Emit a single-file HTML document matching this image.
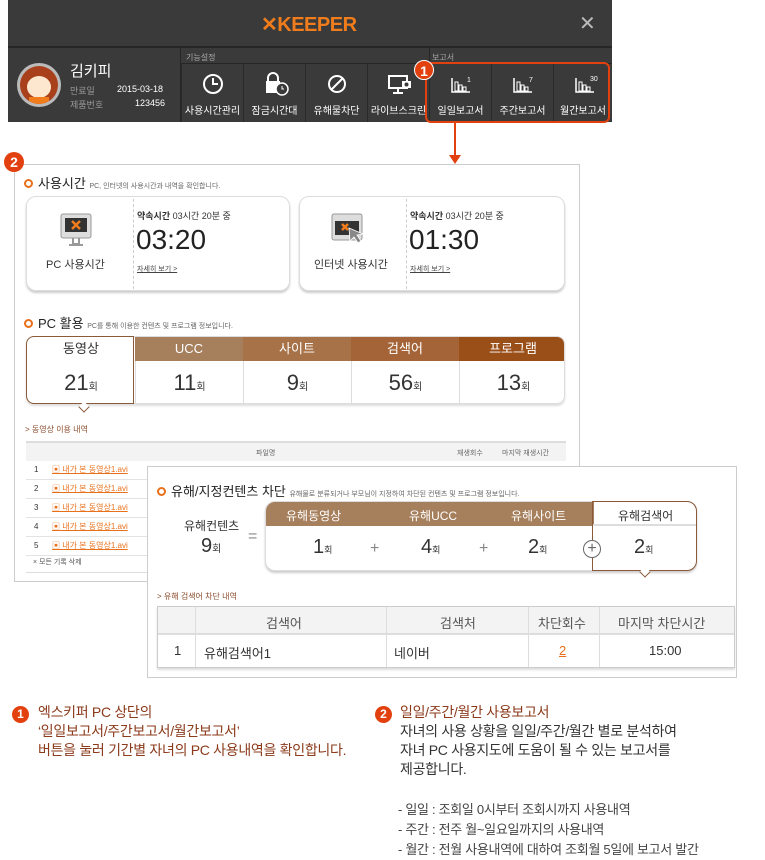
<!DOCTYPE html>
<html><head><meta charset="utf-8"><style>
*{box-sizing:border-box;margin:0;padding:0}
body{width:765px;height:860px;background:#fff;position:relative;overflow:hidden;font-family:"Liberation Sans","Noto Sans CJK KR",sans-serif;color:#333}
.a{position:absolute}
.t{position:absolute;white-space:nowrap}
.btn{position:absolute;top:64px;height:58px;width:62px;border-left:1px solid #2a2a2a;color:#fff;font-size:10px;text-align:center}
.btn span{position:absolute;bottom:5px;left:0;right:0}
.btn svg{position:absolute;top:8px;left:19px}
.circ{position:absolute;width:20px;height:20px;border-radius:50%;background:#e2410f;color:#fff;font-weight:bold;font-size:14px;text-align:center;line-height:20px}
.card{position:absolute;border:1px solid #ddd;border-radius:10px;box-shadow:0 2px 2px #ccc;background:#fff}
.dot{display:inline-block;width:9px;height:9px;border:2px solid #e8701a;border-radius:50%;margin-right:5px}
.tab{position:absolute;top:0;height:24px;width:108px;color:#fff;font-size:13px;text-align:center;line-height:24px}
.val{position:absolute;top:24px;height:44px;width:108px;text-align:center;font-size:22px;line-height:44px;border-left:1px solid #ddd}
.val small{font-size:10px}
.row{position:absolute;left:26px;width:540px;height:19px;border-bottom:1px solid #e3e3e3;font-size:8px}
</style></head><body>

<!-- top bar -->
<div class="a" style="left:8px;top:0;width:604px;height:122px;background:#3a3a3a"></div>
<div class="a" style="left:8px;top:46px;width:604px;height:2px;background:#262626"></div>
<div class="t" style="left:261px;top:12px;font-size:20px;font-weight:bold;color:#f07c1c;letter-spacing:-0.5px"><span style="color:#f07c1c">✕</span>KEEPER</div>
<div class="t" style="left:579px;top:11px;font-size:20px;color:#bbb">✕</div>
<div class="a" style="left:180px;top:48px;width:1px;height:74px;background:#262626"></div>
<div class="a" style="left:181px;top:63px;width:431px;height:1px;background:#262626"></div>
<div class="t" style="left:186px;top:52px;font-size:8px;color:#aaa">기능설정</div>
<div class="t" style="left:432px;top:52px;font-size:8px;color:#aaa">보고서</div>
<div class="a" style="left:429px;top:48px;width:1px;height:16px;background:#262626"></div>
<!-- avatar -->
<div class="a" style="left:17px;top:63px;width:44px;height:44px;border-radius:50%;background:#bbb"></div>
<div class="a" style="left:20px;top:66px;width:38px;height:38px;border-radius:50%;background:#a8401c;overflow:hidden">
 <div class="a" style="left:7px;top:10px;width:24px;height:22px;border-radius:50%;background:#fde7cf"></div>
 <div class="a" style="left:9px;top:31px;width:20px;height:8px;background:#f07c1c"></div>
</div>
<div class="t" style="left:70px;top:60px;font-size:15px;color:#fff">김키피</div>
<div class="t" style="left:70px;top:84px;font-size:9px;color:#999">만료일</div>
<div class="t" style="left:70px;top:98px;font-size:9px;color:#999">제품번호</div>
<div class="t" style="left:117px;top:84px;font-size:9px;color:#fff">2015-03-18</div>
<div class="t" style="left:135px;top:98px;font-size:9px;color:#fff">123456</div>

<div class="btn" style="left:181px"><svg width="24" height="24"><circle cx="12" cy="12" r="9" stroke="#fff" stroke-width="2" fill="none"/><path d="M12 6v6h5" stroke="#fff" stroke-width="2" fill="none"/></svg><span>사용시간관리</span></div>
<div class="btn" style="left:243px"><svg width="26" height="24"><path d="M5 9V6a5 5 0 0 1 10 0v3" stroke="#fff" stroke-width="2" fill="none"/><rect x="3" y="9" width="14" height="12" fill="#fff"/><circle cx="19" cy="17" r="6" fill="#3a3a3a" stroke="#fff" stroke-width="1.5"/><path d="M19 14v3h2" stroke="#fff" fill="none"/></svg><span>잠금시간대</span></div>
<div class="btn" style="left:305px"><svg width="24" height="24"><circle cx="12" cy="12" r="8" stroke="#fff" stroke-width="2" fill="none"/><path d="M6 18L18 6" stroke="#fff" stroke-width="2"/></svg><span>유해물차단</span></div>
<div class="btn" style="left:367px"><svg width="26" height="24"><rect x="2" y="4" width="18" height="12" stroke="#fff" stroke-width="2" fill="none"/><path d="M11 16v4M6 21h10" stroke="#fff" stroke-width="2"/><rect x="15" y="9" width="9" height="7" fill="#fff"/><circle cx="19.5" cy="12.5" r="2" fill="#3a3a3a"/></svg><span>라이브스크린</span></div>
<div class="btn" style="left:429px"><svg width="26" height="24"><path d="M3 6v14h18" stroke="#fff" fill="none" stroke-width="1.5"/><rect x="6" y="10" width="3" height="9" fill="none" stroke="#fff"/><rect x="10" y="13" width="3" height="6" fill="none" stroke="#fff"/><rect x="14" y="15" width="3" height="4" fill="none" stroke="#fff"/><text x="18" y="10" font-size="7" fill="#fff">1</text></svg><span>일일보고서</span></div>
<div class="btn" style="left:491px"><svg width="26" height="24"><path d="M3 6v14h18" stroke="#fff" fill="none" stroke-width="1.5"/><rect x="6" y="10" width="3" height="9" fill="none" stroke="#fff"/><rect x="10" y="13" width="3" height="6" fill="none" stroke="#fff"/><rect x="14" y="15" width="3" height="4" fill="none" stroke="#fff"/><text x="18" y="10" font-size="7" fill="#fff">7</text></svg><span>주간보고서</span></div>
<div class="btn" style="left:553px;width:59px"><svg width="30" height="24"><path d="M3 6v14h18" stroke="#fff" fill="none" stroke-width="1.5"/><rect x="6" y="10" width="3" height="9" fill="none" stroke="#fff"/><rect x="10" y="13" width="3" height="6" fill="none" stroke="#fff"/><rect x="14" y="15" width="3" height="4" fill="none" stroke="#fff"/><text x="17" y="9" font-size="7" fill="#fff">30</text></svg><span>월간보고서</span></div>
<div class="a" style="left:425px;top:62px;width:185px;height:61px;border:2px solid #e2410f;border-radius:6px"></div>
<div class="circ" style="left:414px;top:60px;border:1px solid #fff">1</div>

<!-- panel 2 -->
<div class="a" style="left:14px;top:164px;width:566px;height:418px;border:1px solid #ccc;background:#fff"></div>
<div class="a" style="left:454px;top:122px;width:2px;height:36px;background:#e2410f"></div>
<div class="a" style="left:449px;top:155px;width:0;height:0;border-left:6px solid transparent;border-right:6px solid transparent;border-top:9px solid #e2410f"></div>
<div class="circ" style="left:4px;top:152px">2</div>
<div class="t" style="left:24px;top:173px;font-size:13px;color:#222"><span class="dot"></span>사용시간 <span style="font-size:7px;color:#666">PC, 인터넷의 사용시간과 내역을 확인합니다.</span></div>

<div class="card" style="left:26px;top:196px;width:264px;height:95px"></div>
<div class="a" style="left:133px;top:199px;width:0;height:90px;border-left:1px dashed #ccc"></div>
<svg class="a" style="left:60px;top:213px" width="34" height="36"><rect x="1" y="1" width="30" height="24" rx="2" fill="#ddd" stroke="#999"/><rect x="5" y="5" width="22" height="14" fill="#333"/><path d="M12 8l8 8M20 8l-8 8" stroke="#f07c1c" stroke-width="2.5"/><path d="M13 25v6h6v-6M9 32h14" stroke="#999" fill="none" stroke-width="2"/></svg>
<div class="t" style="left:46px;top:256px;font-size:11px;color:#333">PC 사용시간</div>
<div class="t" style="left:137px;top:209px;font-size:9px;color:#333"><b>약속시간</b> 03시간 20분 중</div>
<div class="t" style="left:136px;top:224px;font-size:28px;color:#222;font-weight:300">03:20</div>
<div class="t" style="left:137px;top:264px;font-size:7px;color:#444;text-decoration:underline">자세히 보기 &gt;</div>

<div class="card" style="left:299px;top:196px;width:266px;height:95px"></div>
<div class="a" style="left:406px;top:199px;width:0;height:90px;border-left:1px dashed #ccc"></div>
<svg class="a" style="left:331px;top:213px" width="40" height="36"><rect x="1" y="1" width="30" height="26" rx="2" fill="#ddd" stroke="#999"/><rect x="4" y="8" width="24" height="14" fill="#333"/><path d="M11 11l6 6M17 11l-6 6" stroke="#f07c1c" stroke-width="2.5"/><path d="M18 15l14 6-6 1 4 6-3 2-4-6-4 4z" fill="#888" stroke="#fff" stroke-width=".8"/></svg>
<div class="t" style="left:314px;top:256px;font-size:11px;color:#333">인터넷 사용시간</div>
<div class="t" style="left:410px;top:209px;font-size:9px;color:#333"><b>약속시간</b> 03시간 20분 중</div>
<div class="t" style="left:409px;top:224px;font-size:28px;color:#222;font-weight:300">01:30</div>
<div class="t" style="left:410px;top:264px;font-size:7px;color:#444;text-decoration:underline">자세히 보기 &gt;</div>

<div class="t" style="left:24px;top:313px;font-size:13px;color:#222"><span class="dot"></span>PC 활용 <span style="font-size:7px;color:#666">PC를 통해 이용한 컨텐츠 및 프로그램 정보입니다.</span></div>
<div class="a" style="left:26px;top:336px;width:539px;height:68px;border:1px solid #ddd;border-radius:8px;overflow:hidden;box-shadow:0 2px 2px #ddd">
 <div class="tab" style="left:0;background:#fff;color:#333">동영상</div>
 <div class="tab" style="left:108px;background:#a67f5d">UCC</div>
 <div class="tab" style="left:216px;background:#a87248">사이트</div>
 <div class="tab" style="left:324px;background:#a46437">검색어</div>
 <div class="tab" style="left:432px;background:#9a4e18;width:108px">프로그램</div>
 <div class="val" style="left:0;border:none">21<small>회</small></div>
 <div class="val" style="left:108px">11<small>회</small></div>
 <div class="val" style="left:216px">9<small>회</small></div>
 <div class="val" style="left:324px">56<small>회</small></div>
 <div class="val" style="left:432px">13<small>회</small></div>
</div>
<div class="a" style="left:26px;top:336px;width:108px;height:68px;border:1px solid #8b5a3a;border-radius:8px 0 0 8px"></div>
<div class="a" style="left:80px;top:403px;width:8px;height:8px;background:#fff;border-right:1px solid #8b5a3a;border-bottom:1px solid #8b5a3a;transform:rotate(45deg)"></div>

<div class="t" style="left:25px;top:424px;font-size:8px;color:#8b4a2a">&gt; 동영상 이용 내역</div>
<div class="a" style="left:26px;top:441px;width:540px;height:20px;background:#f3f3f3;border-top:2px solid #ddd;font-size:7px;color:#666">
 <span class="t" style="left:230px;top:5px">파일명</span><span class="t" style="left:431px;top:5px">재생회수</span><span class="t" style="left:476px;top:5px">마지막 재생시간</span></div>
<div class="row" style="top:461px"><span class="t" style="left:8px;top:4px">1</span><span class="t" style="left:26px;top:3px;color:#e8701a;text-decoration:underline">▣ 내가 본 동영상1.avi</span><span class="t" style="left:437px;top:4px;color:#e8701a">12</span><span class="t" style="left:492px;top:4px">15:00</span></div>
<div class="row" style="top:480px"><span class="t" style="left:8px;top:4px">2</span><span class="t" style="left:26px;top:3px;color:#e8701a;text-decoration:underline">▣ 내가 본 동영상1.avi</span></div>
<div class="row" style="top:499px"><span class="t" style="left:8px;top:4px">3</span><span class="t" style="left:26px;top:3px;color:#e8701a;text-decoration:underline">▣ 내가 본 동영상1.avi</span></div>
<div class="row" style="top:518px"><span class="t" style="left:8px;top:4px">4</span><span class="t" style="left:26px;top:3px;color:#e8701a;text-decoration:underline">▣ 내가 본 동영상1.avi</span></div>
<div class="row" style="top:537px"><span class="t" style="left:8px;top:4px">5</span><span class="t" style="left:26px;top:3px;color:#e8701a;text-decoration:underline">▣ 내가 본 동영상1.avi</span></div>
<div class="t" style="left:33px;top:557px;font-size:7px;color:#555">× 모든 기록 삭제</div>
<div class="a" style="left:26px;top:572px;width:540px;height:1px;background:#ddd"></div>

<!-- overlay panel -->
<div class="a" style="left:147px;top:466px;width:590px;height:212px;border:1px solid #ccc;background:#fff"></div>
<div class="t" style="left:157px;top:481px;font-size:13px;color:#222"><span class="dot"></span>유해/지정컨텐츠 차단 <span style="font-size:7px;color:#666">유해물로 분류되거나 부모님이 지정하여 차단된 컨텐츠 및 프로그램 정보입니다.</span></div>
<div class="t" style="left:184px;top:517px;font-size:12px">유해컨텐츠</div>
<div class="t" style="left:201px;top:535px;font-size:20px">9<small style="font-size:10px">회</small></div>
<div class="t" style="left:248px;top:528px;font-size:16px;color:#888">=</div>
<div class="a" style="left:265px;top:501px;width:432px;height:70px;border:1px solid #ddd;border-radius:10px;overflow:hidden;box-shadow:0 2px 2px #ccc;background:#fff">
 <div class="a" style="left:0;top:0;width:328px;height:24px;background:#a67f5d"></div>
 <span class="t" style="left:20px;top:5px;color:#fff;font-size:12px">유해동영상</span>
 <span class="t" style="left:143px;top:5px;color:#fff;font-size:12px">유해UCC</span>
 <span class="t" style="left:245px;top:5px;color:#fff;font-size:12px">유해사이트</span>
 <span class="t" style="left:352px;top:5px;color:#333;font-size:12px">유해검색어</span>
 <span class="t" style="left:47px;top:34px;font-size:20px">1<small style="font-size:9px">회</small></span>
 <span class="t" style="left:104px;top:38px;font-size:16px;color:#888">+</span>
 <span class="t" style="left:155px;top:34px;font-size:20px">4<small style="font-size:9px">회</small></span>
 <span class="t" style="left:213px;top:38px;font-size:16px;color:#888">+</span>
 <span class="t" style="left:262px;top:34px;font-size:20px">2<small style="font-size:9px">회</small></span>
 <span class="t" style="left:368px;top:34px;font-size:20px">2<small style="font-size:9px">회</small></span>
</div>
<div class="a" style="left:592px;top:501px;width:105px;height:70px;border:1px solid #8b5a3a;border-radius:0 10px 10px 0"></div>
<div class="a" style="left:593px;top:524px;width:103px;height:2px;background:#ddd"></div>
<div class="a" style="left:583px;top:540px;width:18px;height:18px;border-radius:50%;border:1px solid #666;background:#fff;text-align:center;line-height:15px;font-size:16px;color:#666">+</div>
<div class="a" style="left:641px;top:568px;width:8px;height:8px;background:#fff;border-right:1px solid #8b5a3a;border-bottom:1px solid #8b5a3a;transform:rotate(45deg)"></div>

<div class="t" style="left:157px;top:591px;font-size:8px;color:#8b4a2a">&gt; 유해 검색어 차단 내역</div>
<div class="a" style="left:157px;top:606px;width:578px;height:62px;border:1px solid #ccc;box-shadow:0 2px 2px #ddd;font-size:13px">
 <div class="a" style="left:0;top:0;width:576px;height:28px;background:#f3f3f3;border-bottom:2px solid #ddd"></div>
 <div class="a" style="left:37px;top:0;width:1px;height:60px;background:#ddd"></div>
 <div class="a" style="left:228px;top:0;width:1px;height:60px;background:#ddd"></div>
 <div class="a" style="left:370px;top:0;width:1px;height:60px;background:#ddd"></div>
 <div class="a" style="left:441px;top:0;width:1px;height:60px;background:#ddd"></div>
 <span class="t" style="left:108px;top:6px;color:#555">검색어</span>
 <span class="t" style="left:282px;top:6px;color:#555">검색처</span>
 <span class="t" style="left:380px;top:6px;color:#555">차단회수</span>
 <span class="t" style="left:460px;top:6px;color:#555">마지막 차단시간</span>
 <span class="t" style="left:16px;top:36px">1</span>
 <span class="t" style="left:46px;top:36px">유해검색어1</span>
 <span class="t" style="left:236px;top:36px">네이버</span>
 <span class="t" style="left:401px;top:36px;color:#e8701a;text-decoration:underline">2</span>
 <span class="t" style="left:491px;top:36px">15:00</span>
</div>

<!-- bottom notes -->
<div class="circ" style="left:12px;top:706px;width:17px;height:17px;line-height:17px;font-size:12px">1</div>
<div class="a" style="left:38px;top:703px;font-size:14px;line-height:19px;color:#8b3a1a;white-space:nowrap;letter-spacing:-0.3px">엑스키퍼 PC 상단의<br>‘일일보고서/주간보고서/월간보고서’<br>버튼을 눌러 기간별 자녀의 PC 사용내역을 확인합니다.</div>
<div class="circ" style="left:375px;top:706px;width:17px;height:17px;line-height:17px;font-size:12px">2</div>
<div class="a" style="left:400px;top:703px;font-size:14px;line-height:19px;color:#333;white-space:nowrap;letter-spacing:-0.3px"><span style="color:#8b3a1a">일일/주간/월간 사용보고서</span><br>자녀의 사용 상황을 일일/주간/월간 별로 분석하여<br>자녀 PC 사용지도에 도움이 될 수 있는 보고서를<br>제공합니다.</div>
<div class="a" style="left:398px;top:800px;font-size:13px;line-height:20px;color:#444;white-space:nowrap;letter-spacing:-0.3px">- 일일 : 조회일 0시부터 조회시까지 사용내역<br>- 주간 : 전주 월~일요일까지의 사용내역<br>- 월간 : 전월 사용내역에 대하여 조회월 5일에 보고서 발간</div>
</body></html>
